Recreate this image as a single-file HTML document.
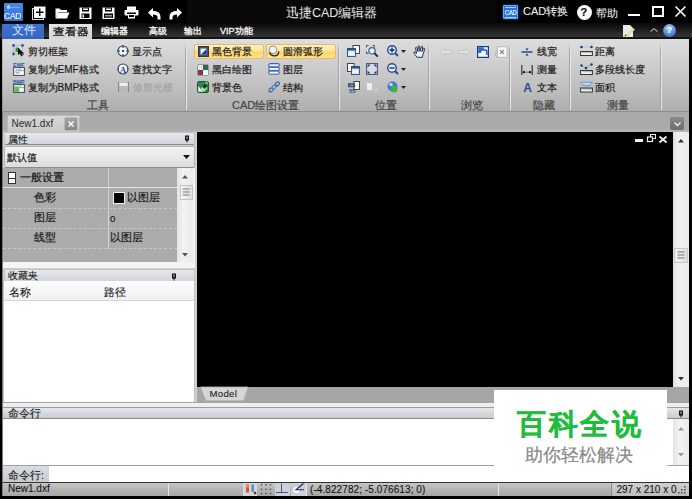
<!DOCTYPE html>
<html><head><meta charset="utf-8">
<style>
*{margin:0;padding:0;box-sizing:border-box}
html,body{width:692px;height:499px;overflow:hidden;background:#000;font-family:"Liberation Sans",sans-serif;}
.a{position:absolute}
.t{position:absolute;white-space:nowrap;line-height:1;color:#1a1a1a;font-size:10px;-webkit-text-stroke:0.2px currentColor}
svg{position:absolute;overflow:visible}
.gl{color:#444;font-size:11px;-webkit-text-stroke:0.2px #444}
.sep{position:absolute;top:42px;width:2px;height:68px;background:linear-gradient(90deg,#a4a4a4 50%,#e8e8e8 50%);-webkit-mask-image:linear-gradient(transparent,#000 15%,#000)}
</style></head><body>
<div class="a" style="left:0;top:0;width:692px;height:499px;background:#000;overflow:hidden">

<!-- ============ TITLE BAR ============ -->
<div class="a" style="left:0;top:0;width:692px;height:23px;background:#000"></div>
<!-- CAD logo -->
<div class="a" style="left:4px;top:3px;width:18.5px;height:17.5px;background:linear-gradient(#4a88e8,#3570d8);border-radius:1px"></div>
<div class="t" style="left:3.5px;top:10.5px;font-size:9.5px;color:#e8f0ff;transform:scaleX(0.9);transform-origin:0 0;width:24px;letter-spacing:-0.3px">CAD</div>
<div class="a" style="left:6.5px;top:5px;width:3px;height:4px;border-radius:2px;background:#b8d4f8"></div>
<div class="a" style="left:10px;top:6.5px;width:10px;height:1px;background:#7aa8f0"></div>
<!-- new -->
<svg style="left:31px;top:6px" width="16" height="14"><rect x="1.5" y="2.5" width="11" height="11" fill="none" stroke="#ddd" stroke-width="1"/><rect x="3" y="0.5" width="11.5" height="11.5" fill="#fff"/><path d="M8.75 2.5v7.5M5 6.25h7.5" stroke="#000" stroke-width="1.4"/></svg>
<!-- open folder -->
<svg style="left:55px;top:6px" width="15" height="13"><path d="M0.5 2.5h4l1.5 1.5h6v2H3.5L0.5 12z" fill="#fff"/><path d="M3 6.5h11.5L12 12.5H0.5z" fill="#fff"/></svg>
<!-- save -->
<svg style="left:79px;top:7px" width="13" height="12"><rect x="0.5" y="0.5" width="12" height="11.5" fill="#fff"/><rect x="3" y="0.5" width="7" height="4" fill="#000"/><rect x="4" y="1.5" width="5" height="1.5" fill="#fff"/><rect x="2.5" y="6.5" width="8" height="4.5" fill="#000"/><rect x="3.5" y="7.5" width="1.5" height="3" fill="#fff"/></svg>
<!-- save as -->
<svg style="left:102px;top:7px" width="13" height="12"><rect x="0.5" y="0.5" width="12" height="11.5" fill="#fff"/><rect x="3" y="0.5" width="7" height="4" fill="#000"/><rect x="4" y="1.5" width="5" height="1.5" fill="#fff"/><rect x="2" y="6.5" width="9" height="4.5" fill="#000"/><path d="M3 8.5h7M3 10h7" stroke="#bbb" stroke-width="0.8"/></svg>
<!-- print -->
<svg style="left:124px;top:6px" width="15" height="13"><rect x="3" y="0.5" width="9" height="3.5" fill="#fff"/><rect x="0.5" y="4" width="14" height="5.5" fill="#fff" rx="1"/><rect x="3" y="6.5" width="9" height="1.5" fill="#000"/><rect x="4" y="8" width="7" height="4.5" fill="#fff"/><rect x="5" y="9" width="5" height="2" fill="#000"/></svg>
<!-- undo -->
<svg style="left:147px;top:7px" width="15" height="13"><path d="M1 5.5L6 1v3c4 0 7.5 1.5 7.5 6v2.5h-3V10.5c0-2-1.5-3-4.5-3v3z" fill="#fff"/></svg>
<!-- redo -->
<svg style="left:168px;top:7px" width="15" height="13"><path d="M14 5.5L9 1v3c-4 0-7.5 1.5-7.5 6v2.5h3V10.5c0-2 1.5-3 4.5-3v3z" fill="#fff"/></svg>

<div class="a" style="left:187px;top:0;width:309px;height:23px;background:#090909"></div>
<div class="t" style="left:286px;top:7px;font-size:12.5px;color:#e6e6e6;-webkit-text-stroke:0">迅捷CAD编辑器</div>

<!-- CAD convert -->
<div class="a" style="left:503px;top:4.5px;width:15px;height:14.5px;background:#2c74d8;border:1px solid #6aa8f4;border-radius:1px;box-shadow:0 0 2px #2a7cff"></div>
<div class="a" style="left:505px;top:6.5px;width:11px;height:1px;background:#a8d0ff"></div>
<div class="a" style="left:505px;top:16.5px;width:11px;height:1px;background:#a8d0ff"></div>
<div class="t" style="left:505px;top:8.5px;font-size:7.5px;color:#e8f4ff;letter-spacing:-0.4px;transform:scaleX(0.78);transform-origin:0 0">CAD</div>
<div class="t" style="left:523px;top:6px;font-size:11px;color:#eee;-webkit-text-stroke:0.1px #eee">CAD转换</div>
<!-- help -->
<div class="a" style="left:577px;top:5px;width:15px;height:15px;border-radius:8px;background:#fff"></div>
<div class="t" style="left:580.5px;top:7px;font-size:11px;color:#111;font-weight:bold">?</div>
<div class="t" style="left:596px;top:7.5px;font-size:11px;color:#e6e6e6;-webkit-text-stroke:0.1px #e6e6e6">帮助</div>
<div class="a" style="left:628px;top:14px;width:12px;height:2px;background:#fff"></div>
<div class="a" style="left:652px;top:6px;width:11.5px;height:10.5px;border:2px solid #fff"></div>
<svg style="left:675px;top:6px" width="11" height="11"><path d="M0.5 0.5L10.5 10.5M10.5 0.5L0.5 10.5" stroke="#fff" stroke-width="1.6"/></svg>

<!-- ============ TAB ROW ============ -->
<div class="a" style="left:0;top:23px;width:692px;height:16px;background:linear-gradient(#080808,#1c1c1c 40%,#363636 88%,#121212 90%)"></div>
<div class="a" style="left:2px;top:24px;width:42px;height:15px;background:linear-gradient(#3f70cc,#3566c4)"></div>
<div class="t" style="left:12px;top:25px;font-size:11.5px;color:#dde8ff;-webkit-text-stroke:0">文件</div>
<div class="a" style="left:49px;top:24px;width:43px;height:15px;background:linear-gradient(#e4e4e4,#d6d6d6)"></div>
<div class="t" style="left:53px;top:26px;font-size:11.5px;color:#111;-webkit-text-stroke:0.35px #111;transform:scaleY(0.85);transform-origin:0 50%">查看器</div>
<div class="t" style="left:100.5px;top:26.5px;font-size:9px;color:#f4f4f4;-webkit-text-stroke:0.35px #f4f4f4">编辑器</div>
<div class="t" style="left:148.5px;top:26.5px;font-size:9px;color:#f4f4f4;-webkit-text-stroke:0.35px #f4f4f4">高级</div>
<div class="t" style="left:183.5px;top:26.5px;font-size:9px;color:#f4f4f4;-webkit-text-stroke:0.35px #f4f4f4">输出</div>
<div class="t" style="left:220px;top:26.5px;font-size:9px;color:#f4f4f4;-webkit-text-stroke:0.35px #f4f4f4">VIP功能</div>
<!-- right icons -->
<svg style="left:622px;top:24px" width="15" height="14"><path d="M1 1h7l3 3v9H1z" fill="#e8eaf0"/><path d="M2.5 12.5L11 4l2 1.5-8.5 8z" fill="#e4dca0"/><path d="M2.5 12.5l1-2.5 1.5 1.5z" fill="#555"/></svg>
<svg style="left:649.5px;top:27.5px" width="8" height="4"><path d="M0.5 3.5L4 0.6 7.5 3.5" fill="none" stroke="#aaa" stroke-width="1.1"/></svg>
<div class="a" style="left:663px;top:24px;width:12.5px;height:12.5px;border-radius:7px;background:radial-gradient(circle at 45% 30%,#a8ccf4,#4a86d4 60%,#3a70c0)"></div>
<div class="t" style="left:666.5px;top:25.5px;font-size:9px;color:#fff;font-weight:bold">?</div>

<!-- ============ RIBBON ============ -->
<div class="a" style="left:3px;top:39px;width:686px;height:73px;background:linear-gradient(#dddddd,#d2d2d2 25%,#c0c0c0 65%,#adadad)"></div>
<div class="sep" style="left:185px"></div>
<div class="sep" style="left:338px"></div>
<div class="sep" style="left:428px"></div>
<div class="sep" style="left:509px"></div>
<div class="sep" style="left:569px"></div>
<div class="sep" style="left:660px"></div>

<!-- tools group -->
<svg style="left:12px;top:44px" width="12" height="13"><path d="M1.5 1.5h9M1.5 10h9M1.5 1.5v8.5M10.5 1.5v8.5" stroke="#6a8ac8" stroke-width="0.8" stroke-dasharray="1 1"/><g fill="#2a58a8"><circle cx="1.5" cy="1.5" r="1.4"/><circle cx="10.5" cy="1.5" r="1.4"/><circle cx="1.5" cy="10" r="1.4"/><circle cx="10.5" cy="10" r="1.4"/></g><rect x="3.5" y="3.5" width="2.5" height="4.5" fill="#2f9a3a"/><path d="M6 3.5V11l1.8-1.6 1.4 3 1.2-0.6-1.3-2.9H11.5z" fill="#111"/></svg>
<div class="t" style="left:27.5px;top:46.5px">剪切框架</div>
<svg style="left:12.5px;top:62.5px" width="12" height="13"><text x="0" y="3.6" font-size="4.6" font-weight="bold" fill="#2a58b0" font-family="Liberation Sans" textLength="11.5" lengthAdjust="spacingAndGlyphs">EMF</text><rect x="0.6" y="4.6" width="10.8" height="7.8" fill="#fafafa" stroke="#3a4660" stroke-width="1"/><rect x="3" y="7" width="3" height="3" fill="#fff" stroke="#555" stroke-width="0.6"/><path d="M7 4.6v3h4" stroke="#6a7aa0" stroke-width="0.7" fill="none"/></svg>
<div class="t" style="left:27.5px;top:64.5px">复制为EMF格式</div>
<svg style="left:12.5px;top:79.5px" width="12" height="13"><text x="0" y="3.6" font-size="4.6" font-weight="bold" fill="#2a58b0" font-family="Liberation Sans" textLength="11.5" lengthAdjust="spacingAndGlyphs">BMP</text><rect x="0.6" y="4.6" width="10.8" height="7.8" fill="#fafafa" stroke="#3a4660" stroke-width="1"/><rect x="1.2" y="6.5" width="5" height="5.4" fill="#5cc050"/><path d="M7 4.6v3h4" stroke="#6a7aa0" stroke-width="0.7" fill="none"/></svg>
<div class="t" style="left:27.5px;top:82.5px">复制为BMP格式</div>

<svg style="left:117px;top:45px" width="12" height="12"><circle cx="6" cy="6" r="5" fill="#f2f5fc" stroke="#3a4258" stroke-width="1.1"/><path d="M6 0v3M6 9v3M0 6h3M9 6h3" stroke="#2a3248" stroke-width="1.1"/><rect x="5" y="5" width="2" height="2" fill="#2a4a90"/></svg>
<div class="t" style="left:132px;top:46.5px">显示点</div>
<svg style="left:117px;top:63px" width="12" height="12"><circle cx="6" cy="6" r="5" fill="#f2f5fc" stroke="#3a4258" stroke-width="1.1"/><path d="M0.5 6h1.5M10 6h1.5" stroke="#2a3248" stroke-width="1"/><text x="6" y="9.6" font-size="9" font-weight="bold" text-anchor="middle" fill="#2a4a90" font-family="Liberation Serif">A</text></svg>
<div class="t" style="left:132px;top:64.5px">查找文字</div>
<svg style="left:118px;top:82px" width="11" height="10"><rect x="0.5" y="0.5" width="10" height="9" fill="#b8b8b8"/><rect x="1.5" y="1" width="8" height="3" fill="#f0f0f0"/><path d="M0.5 0v10M10.5 0v10" stroke="#888" stroke-width="1"/></svg>
<div class="t" style="left:132.5px;top:82.5px;color:#a4a4a4;filter:blur(0.3px)">修剪光栅</div>
<div class="t gl" style="left:86.5px;top:99.5px">工具</div>

<!-- CAD drawing settings -->
<div class="a" style="left:194px;top:44px;width:70px;height:15px;border:1px solid #e4bc68;border-radius:2px;background:linear-gradient(#fff2c8,#ffe294 45%,#ffd666 55%,#ffe08c)"></div>
<div class="a" style="left:266px;top:44px;width:70px;height:15px;border:1px solid #e4bc68;border-radius:2px;background:linear-gradient(#fff2c8,#ffe294 45%,#ffd666 55%,#ffe08c)"></div>
<svg style="left:197.5px;top:45.5px" width="11" height="11"><rect x="0.5" y="0.5" width="10" height="10" fill="#3c4c78" stroke="#283458"/><rect x="2.5" y="2.5" width="6" height="6" fill="#e8f0ff"/><path d="M3 8.5L8.5 3V8.5z" fill="#2a3a68"/></svg>
<div class="t" style="left:211.5px;top:46.5px">黑色背景</div>
<svg style="left:268px;top:45px" width="12" height="12"><circle cx="5" cy="4.8" r="3.8" fill="#f4f6fa" stroke="#8a8e98" stroke-width="1"/><path d="M1.5 7.5c1 2.5 3 3.5 5.5 3.3 2.5-0.2 3.8-2 3.8-4.5" stroke="#222" fill="none" stroke-width="1.3"/></svg>
<div class="t" style="left:283px;top:46.5px">圆滑弧形</div>

<svg style="left:197px;top:63.5px" width="12" height="12"><rect x="0.5" y="0.5" width="11" height="11" rx="1.5" fill="#e8e4f0" stroke="#7a8090" stroke-width="0.7"/><rect x="6" y="1" width="5" height="5" fill="#2e6a48"/><rect x="1" y="6" width="5" height="5" fill="#7a3848"/><rect x="6" y="6" width="5" height="5" fill="#f4f6fc"/></svg>
<div class="t" style="left:211.5px;top:64.5px">黑白绘图</div>
<svg style="left:268px;top:63px" width="12" height="12"><rect x="0.7" y="8" width="10.6" height="3.3" rx="1.5" fill="#e8f0fb" stroke="#3a66b0" stroke-width="1.1"/><rect x="0.7" y="4.3" width="10.6" height="3.3" rx="1.5" fill="#e8f0fb" stroke="#3a66b0" stroke-width="1.1"/><rect x="0.7" y="0.6" width="10.6" height="3.3" rx="1.5" fill="#e8f0fb" stroke="#3a66b0" stroke-width="1.1"/></svg>
<div class="t" style="left:283px;top:64.5px">图层</div>

<svg style="left:197px;top:81px" width="12" height="12"><rect x="0.6" y="0.6" width="10.8" height="10.8" rx="1.2" fill="#2a8a50" stroke="#1a4a30" stroke-width="1"/><path d="M1.2 10.8L1.2 5 6 10.8z" fill="#f0f4ff"/><path d="M2 10.5L7 3.5l3.5 3.5-3 3.5z" fill="#a8e8a8"/><path d="M5 5.5l3-3 2.5 2.5-3 3z" fill="#1a3a28"/><circle cx="9.5" cy="1.8" r="1.5" fill="#6ac060"/></svg>
<div class="t" style="left:211.5px;top:82.5px">背景色</div>
<svg style="left:268px;top:81px" width="12" height="12"><ellipse cx="3" cy="9" rx="2.4" ry="1.6" transform="rotate(-40 3 9)" fill="none" stroke="#3a60b0" stroke-width="1.1"/><ellipse cx="6.2" cy="6" rx="2.4" ry="1.6" transform="rotate(-40 6.2 6)" fill="none" stroke="#5a80c8" stroke-width="1.1"/><ellipse cx="9.3" cy="3" rx="2.4" ry="1.6" transform="rotate(-40 9.3 3)" fill="none" stroke="#3a60b0" stroke-width="1.1"/></svg>
<div class="t" style="left:283px;top:82.5px">结构</div>
<div class="t gl" style="left:232px;top:99.5px">CAD绘图设置</div>

<!-- position group -->
<svg style="left:347px;top:45px" width="13" height="12"><rect x="6" y="0.5" width="6.5" height="8" fill="#fafafa" stroke="#333" stroke-width="0.9"/><rect x="0.5" y="3.5" width="8" height="8" fill="#d8e6fa" stroke="#2a4a88" stroke-width="0.9"/><rect x="0.5" y="3.5" width="8" height="2" fill="#2a4a88"/><rect x="2" y="7.5" width="5" height="2.5" fill="#f4f8ff"/></svg>
<svg style="left:366px;top:45px" width="13" height="12"><path d="M0.5 2.5v-2h2M6.5 0.5h2v2M0.5 6.5v2h2" stroke="#333" stroke-width="0.8" fill="none"/><circle cx="6" cy="5.8" r="3.2" fill="#e4eefc" stroke="#3a5a90" stroke-width="1.2"/><path d="M8.3 8.1l3.5 3.5" stroke="#222" stroke-width="1.8"/></svg>
<svg style="left:387px;top:45px" width="19" height="12"><circle cx="5" cy="5" r="4.3" fill="#e0ecff" stroke="#2a4a90" stroke-width="1.4"/><path d="M5 2.5v5M2.5 5h5" stroke="#102a70" stroke-width="1.4"/><path d="M8 8l3 3" stroke="#2a4a90" stroke-width="2"/><path d="M14 5h5l-2.5 3z" fill="#222"/></svg>
<svg style="left:412.5px;top:44.5px" width="13" height="13"><path d="M4 12.3L1 8.2c-0.6-0.9 0.3-1.6 1-1L3.5 8.5 2.6 3c-0.2-1 1.2-1.2 1.4-0.2L5 6.5 5.2 1.5c0-1 1.4-1 1.4 0L6.9 6.3 8.3 1.8c0.3-1 1.6-0.7 1.4 0.3L8.9 6.6 10.4 3.6c0.5-0.9 1.6-0.4 1.3 0.5L10 9.5 9.3 12.3z" fill="#eaf0fa" stroke="#2a3050" stroke-width="1" stroke-linejoin="round"/></svg>

<svg style="left:347px;top:63px" width="13" height="12"><rect x="0.5" y="0.5" width="6.5" height="8" fill="#fafafa" stroke="#333" stroke-width="0.9"/><rect x="4.5" y="3.5" width="8" height="8" fill="#d8e6fa" stroke="#2a4a88" stroke-width="0.9"/><rect x="4.5" y="3.5" width="8" height="2" fill="#2a4a88"/><rect x="6" y="7.5" width="5" height="2.5" fill="#f4f8ff"/></svg>
<svg style="left:366px;top:63px" width="12" height="12"><rect x="0.5" y="0.5" width="11" height="11" fill="#d6dcea" stroke="#4a5a88" stroke-width="1"/><path d="M1.5 1.5h3l-3 3zM10.5 1.5h-3l3 3zM1.5 10.5h3l-3-3zM10.5 10.5h-3l3-3z" fill="#2a3050"/></svg>
<svg style="left:387px;top:63px" width="19" height="12"><circle cx="5" cy="5" r="4.3" fill="#e0ecff" stroke="#2a4a90" stroke-width="1.4"/><path d="M2.5 5h5" stroke="#102a70" stroke-width="1.4"/><path d="M8 8l3 3" stroke="#2a4a90" stroke-width="2"/><path d="M14 5h5l-2.5 3z" fill="#222"/></svg>

<svg style="left:347px;top:81px" width="13" height="12"><rect x="7" y="0.5" width="5.5" height="8" fill="#fafafa" stroke="#333" stroke-width="0.9"/><path d="M1 3h7M1 5.5h7" stroke="#2a4a88" stroke-width="1.3"/><path d="M0.5 4.2L2.5 2.5v3.5zM8.5 4.2L6.5 2.5v3.5z" fill="#2a4a88"/><text x="2" y="11.5" font-size="6" font-weight="bold" fill="#2a4a88" font-family="Liberation Sans">55</text></svg>
<svg style="left:366px;top:81px" width="12" height="12"><rect x="1" y="2" width="5" height="7" fill="#eee"/><text x="7.5" y="10" font-size="8" fill="#ddd" font-family="Liberation Sans">u</text></svg>
<svg style="left:387px;top:81px" width="19" height="12"><circle cx="5.5" cy="5.5" r="5" fill="#3a78d8"/><circle cx="7" cy="8" r="3.5" fill="#40b040"/><circle cx="4" cy="3.5" r="1.8" fill="#b8d8ff"/><path d="M14 5h5l-2.5 3z" fill="#222"/></svg>
<div class="t gl" style="left:375px;top:99.5px">位置</div>

<!-- browse -->
<svg style="left:440px;top:47px" width="12" height="10"><path d="M0.5 5L4.5 1.5V3.5h7v3h-7v2z" fill="#e4e4e4" stroke="#c0c0c0" stroke-width="0.8"/></svg>
<svg style="left:457.5px;top:47px" width="12" height="10"><path d="M11.5 5L7.5 1.5V3.5h-7v3h7v2z" fill="#e4e4e4" stroke="#c0c0c0" stroke-width="0.8"/></svg>
<svg style="left:477px;top:46px" width="13" height="12"><rect x="0.6" y="0.6" width="10.8" height="10.8" fill="#f4f8ff" stroke="#1e3a78" stroke-width="1.2"/><path d="M1.2 1.2h5.5v2.8H4v3H1.2z" fill="#2a6ad0"/><path d="M3.5 6.5V5.8c0-1.2 0.8-2 2-2h2.3c1.2 0 2 0.8 2 2V9" stroke="#2a6ad0" stroke-width="1.7" fill="none"/></svg>
<svg style="left:495px;top:46px" width="13" height="12"><path d="M2.5 3.5L0.8 5.5v4l1.7 2" stroke="#aaa" fill="none" stroke-width="0.9"/><rect x="2.5" y="0.8" width="9.5" height="10.5" fill="#f8f8f8" stroke="#b4b4b4" stroke-width="0.9"/><path d="M5 4l4 4M9 4l-4 4" stroke="#8a8a8a" stroke-width="1.1"/></svg>
<div class="t gl" style="left:461px;top:99.5px">浏览</div>

<!-- hide -->
<svg style="left:521px;top:47px" width="12" height="10"><path d="M0.5 5h11" stroke="#2a50a0" stroke-width="1.6"/><path d="M4.5 1.5h3L6 3.5zM4.5 8.5h3L6 6.5z" fill="#1a2a58"/></svg>
<div class="t" style="left:537px;top:46.5px">线宽</div>
<svg style="left:521px;top:64.5px" width="12" height="11"><path d="M0.8 0v10M11.2 0v10" stroke="#333" stroke-width="1.2"/><path d="M1.5 7.2h9" stroke="#4a6aa0" stroke-width="0.9"/><circle cx="3" cy="7.2" r="1.1" fill="#111"/><circle cx="9" cy="7.2" r="1.1" fill="#111"/></svg>
<div class="t" style="left:537px;top:64.5px">测量</div>
<svg style="left:521px;top:82px" width="12" height="10"><text x="6.5" y="9.5" font-size="12" font-weight="bold" text-anchor="middle" fill="#2a4a98" font-family="Liberation Sans">A</text></svg>
<div class="t" style="left:537px;top:82.5px">文本</div>
<div class="t gl" style="left:532.5px;top:99.5px">隐藏</div>

<!-- measure -->
<svg style="left:580px;top:45px" width="13" height="12"><path d="M1.5 2h10" stroke="#8aa0c8" stroke-width="0.8" stroke-dasharray="1 1"/><circle cx="1.5" cy="2" r="1.3" fill="#1a3a88"/><circle cx="11.5" cy="2" r="1.3" fill="#1a3a88"/><rect x="0.6" y="6.5" width="11.8" height="4" fill="#f4f4f4" stroke="#333" stroke-width="1"/><path d="M3 6.5v1.8M5 6.5v1.8M7 6.5v1.8M9 6.5v1.8M11 6.5v1.8" stroke="#444" stroke-width="0.6"/></svg>
<div class="t" style="left:595px;top:46.5px">距离</div>
<svg style="left:580px;top:63px" width="13" height="12"><path d="M1.5 2.5L6 5 11.5 1.5" stroke="#8aa0c8" stroke-width="0.8" fill="none"/><circle cx="1.5" cy="2.5" r="1.2" fill="#1a3a88"/><circle cx="6" cy="5" r="1.3" fill="#1a3a88"/><circle cx="11.5" cy="1.5" r="1.2" fill="#1a3a88"/><rect x="0.6" y="7.5" width="11.8" height="4" fill="#f4f4f4" stroke="#333" stroke-width="1"/><path d="M3 7.5v1.8M5 7.5v1.8M7 7.5v1.8M9 7.5v1.8M11 7.5v1.8" stroke="#444" stroke-width="0.6"/></svg>
<div class="t" style="left:595px;top:64.5px">多段线长度</div>
<svg style="left:580px;top:80.5px" width="13" height="12"><path d="M0.8 1.2h11.4c0 2-2.5 3.6-5.7 3.6S0.8 3.2 0.8 1.2z" fill="#b8d8f8" stroke="#5a80c0" stroke-width="0.8"/><rect x="0.6" y="7" width="11.8" height="4" fill="#f4f4f4" stroke="#333" stroke-width="1"/><path d="M3 7v1.8M5 7v1.8M7 7v1.8M9 7v1.8M11 7v1.8" stroke="#444" stroke-width="0.6"/></svg>
<div class="t" style="left:595px;top:82.5px">面积</div>
<div class="t gl" style="left:607px;top:99.5px">测量</div>

<!-- ============ DOC TAB BAR ============ -->
<div class="a" style="left:3px;top:110.5px;width:686px;height:1.5px;background:#8e8e8e"></div>
<div class="a" style="left:3px;top:112px;width:686px;height:20px;background:linear-gradient(#a8a8a8,#acacac 85%,#b8b8b8)"></div>
<div class="a" style="left:7px;top:115px;width:73px;height:17px;background:linear-gradient(#d8d8d8,#c8c8c8);border:1px solid #b8b8b8;border-bottom:none"></div>
<div class="t" style="left:11.5px;top:118.5px;font-size:10px;color:#2a2a2a;-webkit-text-stroke:0">New1.dxf</div>
<div class="a" style="left:64px;top:117px;width:14px;height:14px;background:linear-gradient(#a4a4a4,#888);border:1px solid #b8b8b8;border-radius:2px"></div>
<svg style="left:68px;top:121px" width="6" height="6"><path d="M0.5 0.5l5 5M5.5 0.5l-5 5" stroke="#fff" stroke-width="1.4"/></svg>
<div class="a" style="left:670px;top:117px;width:14px;height:13px;background:linear-gradient(#8a8a8a,#6e6e6e);border-radius:2px"></div>
<svg style="left:674px;top:121.5px" width="7" height="5"><path d="M0.5 0.5l3 3 3-3" stroke="#eee" stroke-width="1.4" fill="none"/></svg>

<!-- ============ DRAWING AREA ============ -->
<div class="a" style="left:197px;top:132px;width:476px;height:255px;background:#000"></div>
<div class="a" style="left:635px;top:138.5px;width:8px;height:3px;background:#eee"></div>
<svg style="left:647px;top:134px" width="9" height="8"><rect x="3.5" y="0.5" width="5" height="4" fill="none" stroke="#eee"/><rect x="0.5" y="3" width="5" height="4.5" fill="#000" stroke="#eee" stroke-width="1.2"/></svg>
<svg style="left:659px;top:135.5px" width="8" height="7"><path d="M0.5 0.5l7 6M7.5 0.5l-7 6" stroke="#eee" stroke-width="1.8"/></svg>
<!-- v scrollbar -->
<div class="a" style="left:673px;top:132px;width:16px;height:255px;background:linear-gradient(90deg,#e0e0e0,#f0f0f0 30%,#ececec)"></div>
<svg style="left:678px;top:138.5px" width="6" height="3.5"><path d="M0 3.5L3 0 6 3.5z" fill="#333"/></svg>
<div class="a" style="left:674px;top:248px;width:14px;height:15px;background:linear-gradient(90deg,#f4f4f4,#dcdcdc);border:1px solid #c8c8c8"></div>
<svg style="left:677px;top:251px" width="8" height="8"><path d="M0.5 1h7M0.5 4h7M0.5 7h7" stroke="#777" stroke-width="1"/></svg>
<svg style="left:677.5px;top:376.5px" width="6" height="3.5"><path d="M0 0L3 3.5 6 0z" fill="#333"/></svg>
<!-- model bar -->
<div class="a" style="left:197px;top:387px;width:492px;height:15.5px;background:#a6a6a6"></div>
<svg style="left:200px;top:387px" width="49" height="15"><path d="M0.5 0h47.5l-4.5 13.5H6z" fill="#d6d6d6" stroke="#b8b8b8" stroke-width="0.8"/></svg>
<div class="t" style="left:209.5px;top:389px;font-size:9.6px;letter-spacing:0.3px;color:#222;-webkit-text-stroke:0.1px #222">Model</div>

<!-- ============ LEFT PANEL ============ -->
<div class="a" style="left:3px;top:132px;width:194px;height:270px;background:#d0d0d0"></div>
<!-- properties header -->
<div class="a" style="left:4px;top:132px;width:191px;height:13px;background:linear-gradient(#e6e8ea,#d2d5da);border:1px solid #c4c4c4;border-bottom:1.5px solid #8c8c8c;border-radius:2px"></div>
<div class="t" style="left:8px;top:135px;font-size:10px;-webkit-text-stroke:0.1px #111">属性</div>
<svg style="left:183.5px;top:135px" width="6" height="8"><rect x="1.5" y="1" width="3" height="3.6" fill="#777" stroke="#111" stroke-width="1"/><path d="M1 5h4M3 5v2.5" stroke="#111" stroke-width="1"/></svg>
<!-- combo -->
<div class="a" style="left:4px;top:146px;width:191px;height:22px;background:linear-gradient(#f4f4f4,#e8e8e8 50%,#dcdcdc);border:1px solid #b4b4b4;border-bottom:1.5px solid #8c8c8c;border-radius:2px"></div>
<div class="t" style="left:6.5px;top:152.5px;font-size:10px">默认值</div>
<svg style="left:182.5px;top:155px" width="7" height="4"><path d="M0 0h7L3.5 4z" fill="#111"/></svg>
<!-- grid -->
<div class="a" style="left:3px;top:168px;width:174px;height:94px;background:#ababab"></div>
<div class="a" style="left:3px;top:187px;width:174px;height:1px;background:#e4e4e4"></div>
<div class="a" style="left:108px;top:168px;width:1px;height:81px;background:#d4d4d4"></div>
<div class="a" style="left:3px;top:208px;width:174px;height:0;border-top:1px dashed #c6c6c6"></div>
<div class="a" style="left:3px;top:228px;width:174px;height:0;border-top:1px dashed #c6c6c6"></div>
<div class="a" style="left:3px;top:248px;width:174px;height:0;border-top:1px dashed #c6c6c6"></div>
<div class="a" style="left:8px;top:172px;width:8px;height:12px;background:#fff;border:1px solid #333"></div>
<div class="a" style="left:9px;top:177.5px;width:6px;height:1px;background:#333"></div>
<div class="t" style="left:20px;top:172px;font-size:11px">一般设置</div>
<div class="t" style="left:34px;top:192px;font-size:11px">色彩</div>
<div class="a" style="left:112.5px;top:192px;width:12px;height:12px;background:#000;border:1px solid #f0f0f0"></div>
<div class="t" style="left:126.5px;top:192px;font-size:11px">以图层</div>
<div class="t" style="left:34px;top:212px;font-size:11px">图层</div>
<div class="t" style="left:110px;top:214px;font-size:9.5px">0</div>
<div class="t" style="left:34px;top:232px;font-size:11px">线型</div>
<div class="t" style="left:110px;top:232px;font-size:11px">以图层</div>
<!-- grid scrollbar -->
<div class="a" style="left:177px;top:168px;width:16px;height:94px;background:linear-gradient(90deg,#e4e4e4,#f2f2f2 40%,#eaeaea)"></div>
<svg style="left:182px;top:174.5px" width="6" height="3.5"><path d="M0 3.5L3 0 6 3.5z" fill="#555"/></svg>
<div class="a" style="left:179.5px;top:185px;width:13px;height:15px;background:linear-gradient(90deg,#f8f8f8,#dedede);border:1px solid #c4c4c4"></div>
<svg style="left:182px;top:188px" width="8" height="8"><path d="M0.5 1h7M0.5 4h7M0.5 7h7" stroke="#777" stroke-width="1"/></svg>
<svg style="left:182px;top:252.5px" width="6" height="3.5"><path d="M0 0L3 3.5 6 0z" fill="#555"/></svg>
<div class="a" style="left:193px;top:168px;width:2px;height:94px;background:#f4f4f4"></div>
<div class="a" style="left:3px;top:262px;width:192px;height:6px;background:#f4f4f4"></div>

<!-- favorites -->
<div class="a" style="left:4px;top:268.5px;width:191px;height:13px;background:linear-gradient(#e6e8ea,#d2d5da);border:1px solid #c4c4c4;border-bottom:1.5px solid #8c8c8c;border-radius:2px"></div>
<div class="t" style="left:7.5px;top:270.5px;font-size:10.3px;-webkit-text-stroke:0.1px #111">收藏夹</div>
<svg style="left:171px;top:272.5px" width="6" height="8"><rect x="1.5" y="1" width="3" height="3.6" fill="#777" stroke="#111" stroke-width="1"/><path d="M1 5h4M3 5v2.5" stroke="#111" stroke-width="1"/></svg>
<div class="a" style="left:3px;top:281px;width:192px;height:121px;background:#fff;border-left:1px solid #c0c0c0;border-right:1px solid #c0c0c0"></div>
<div class="a" style="left:4px;top:282px;width:190px;height:18.5px;background:linear-gradient(#fcfcfc,#f0f0f0);border-bottom:1px solid #d4d4d4"></div>
<div class="t" style="left:8.5px;top:286.5px;font-size:11px;-webkit-text-stroke:0.1px #111">名称</div>
<div class="t" style="left:103.5px;top:286.5px;font-size:11px;-webkit-text-stroke:0.1px #111">路径</div>

<!-- ============ COMMAND ============ -->
<div class="a" style="left:3px;top:402px;width:686px;height:5px;background:linear-gradient(#a4a4a4 20%,#eeeeee 20%)"></div>
<div class="a" style="left:3px;top:407px;width:686px;height:12px;background:linear-gradient(#e4e6e8,#c8ccd2);border-top:1px solid #9c9c9c;border-bottom:1.5px solid #8c8c8c"></div>
<div class="t" style="left:8px;top:407.5px;font-size:10.7px;-webkit-text-stroke:0.1px #111">命令行</div>
<svg style="left:677.5px;top:410px" width="6" height="8"><rect x="1.5" y="1" width="3" height="3.6" fill="#777" stroke="#111" stroke-width="1"/><path d="M1 5h4M3 5v2.5" stroke="#111" stroke-width="1"/></svg>
<div class="a" style="left:3px;top:419px;width:686px;height:46px;background:#fff"></div>
<div class="a" style="left:673px;top:419px;width:16px;height:46px;background:linear-gradient(90deg,#e4e4e4,#f2f2f2 40%,#eaeaea)"></div>
<svg style="left:678px;top:427px" width="6" height="3.5"><path d="M0 3.5L3 0 6 3.5z" fill="#999"/></svg>
<svg style="left:678px;top:453px" width="6" height="3.5"><path d="M0 0L3 3.5 6 0z" fill="#999"/></svg>
<div class="a" style="left:3px;top:465px;width:686px;height:1px;background:#a0a0a0"></div>
<div class="a" style="left:3px;top:466px;width:686px;height:16px;background:#fff"></div>
<div class="a" style="left:3px;top:466px;width:46px;height:16px;background:linear-gradient(#d8dce2,#c8ccd2)"></div>
<div class="t" style="left:8px;top:469.5px;font-size:10.7px;-webkit-text-stroke:0.1px #111">命令行:</div>

<!-- status bar -->
<div class="a" style="left:3px;top:482px;width:686px;height:1px;background:#333"></div>
<div class="a" style="left:3px;top:483px;width:686px;height:13px;background:linear-gradient(#c6c6c6,#b4b4b4 50%,#a6a6a6)"></div><div class="a" style="left:168px;top:483px;width:1px;height:13px;background:#e4e4e4"></div><div class="a" style="left:498px;top:483px;width:1px;height:13px;background:#e4e4e4"></div>
<div class="t" style="left:8px;top:484px;font-size:10px;color:#111;-webkit-text-stroke:0.1px #111">New1.dxf</div>

<svg style="left:243px;top:483px" width="14" height="13"><rect x="0" y="0" width="14" height="13" fill="#d6d6d6"/><path d="M4.5 1.5v8" stroke="#e04848" stroke-width="3"/><path d="M4.5 1.5v3" stroke="#f08070" stroke-width="3"/><path d="M9.7 1.5v7.5" stroke="#3a90d0" stroke-width="2.3"/><circle cx="12" cy="10" r="1.3" fill="#901020"/></svg>
<svg style="left:259px;top:483px" width="13" height="13"><g fill="#444"><circle cx="2.5" cy="1.8" r="0.8"/><circle cx="7" cy="1.8" r="0.8"/><circle cx="11.5" cy="1.8" r="0.8"/><circle cx="2.5" cy="6.3" r="0.8"/><circle cx="7" cy="6.3" r="0.8"/><circle cx="11.5" cy="6.3" r="0.8"/><circle cx="2.5" cy="10.5" r="0.8"/><circle cx="7" cy="10.5" r="0.8"/><circle cx="11.5" cy="10.5" r="0.8"/></g></svg>
<svg style="left:275px;top:483px" width="15" height="13"><rect x="0" y="0" width="15" height="13" fill="#cdd0d6"/><path d="M6.5 0.5v9M1 9.5h12" stroke="#4a5670" stroke-width="1"/></svg>
<svg style="left:291px;top:483px" width="15" height="13"><rect x="0" y="0" width="15" height="13" fill="#cdd0d6"/><circle cx="5.5" cy="7" r="4" fill="#fafcff" stroke="#a8b8d8" stroke-width="0.8"/><path d="M12.5 0.5L5 6.8h8" stroke="#1e2a48" stroke-width="1.1" fill="none"/></svg>
<div class="a" style="left:306px;top:483px;width:1px;height:13px;background:#e8e8e8"></div>
<div class="t" style="left:310px;top:485px;font-size:10px;color:#111;-webkit-text-stroke:0.1px #111;letter-spacing:0.08px">(-4.822782; -5.076613; 0)</div>
<div class="a" style="left:611px;top:483px;width:1px;height:13px;background:#8a8a8a"></div>
<div class="a" style="left:612px;top:483px;width:77px;height:13px;background:linear-gradient(#d0d0d0,#bcbcbc)"></div>
<div class="t" style="left:616.5px;top:485px;font-size:10px;color:#111;-webkit-text-stroke:0.1px #111">297 x 210 x 0</div>
<svg style="left:678px;top:486px" width="8" height="8"><g fill="#444"><rect x="6" y="0" width="1.5" height="1.5"/><rect x="3" y="3" width="1.5" height="1.5"/><rect x="6" y="3" width="1.5" height="1.5"/><rect x="0" y="6" width="1.5" height="1.5"/><rect x="3" y="6" width="1.5" height="1.5"/><rect x="6" y="6" width="1.5" height="1.5"/></g></svg>

<div class="a" style="left:2px;top:39px;width:1px;height:73px;background:linear-gradient(#c0c0c0,#909090)"></div>
<div class="a" style="left:2px;top:112px;width:1px;height:384px;background:#7c7c7c"></div>
<!-- ============ WATERMARK ============ -->
<div class="a" style="left:494px;top:390px;width:173px;height:81px;background:#fff"></div>
<div class="t" style="left:517px;top:409.5px;font-size:29px;font-weight:bold;color:#1fbd3c;letter-spacing:2.6px">百科全说</div>
<div class="t" style="left:525px;top:445.5px;font-size:18px;color:#888">助你轻松解决</div>

</div>
</body></html>
